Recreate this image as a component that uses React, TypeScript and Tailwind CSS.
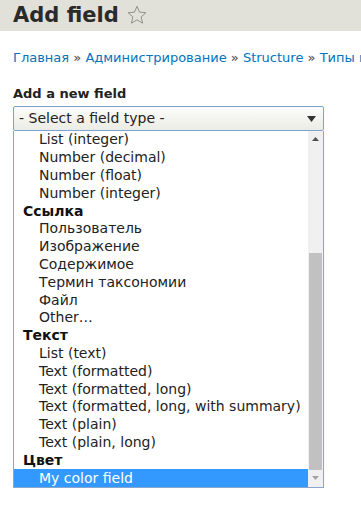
import React from "react";

const items: { label: string; group?: boolean; selected?: boolean }[] = [
  { label: "List (integer)" },
  { label: "Number (decimal)" },
  { label: "Number (float)" },
  { label: "Number (integer)" },
  { label: "Ссылка", group: true },
  { label: "Пользователь" },
  { label: "Изображение" },
  { label: "Содержимое" },
  { label: "Термин таксономии" },
  { label: "Файл" },
  { label: "Other…" },
  { label: "Текст", group: true },
  { label: "List (text)" },
  { label: "Text (formatted)" },
  { label: "Text (formatted, long)" },
  { label: "Text (formatted, long, with summary)" },
  { label: "Text (plain)" },
  { label: "Text (plain, long)" },
  { label: "Цвет", group: true },
  { label: "My color field", selected: true },
];

const font = { fontFamily: '"DejaVu Sans", Verdana, sans-serif' };

export default function App() {
  return (
    <div className="w-[361px] h-[518px] bg-white overflow-hidden" style={font}>
      {/* page title band */}
      <div className="h-[31px] bg-[#e1e0d9] pl-[13px] flex items-center gap-[7px]">
        <h1 className="text-[21px] leading-none font-bold text-[#2a2a2a]">Add field</h1>
        <svg width="22" height="22" viewBox="0 0 24 24" className="mt-[-2px]">
          <path
            d="M12 2.5l2.8 6.4 6.9.6-5.2 4.6 1.6 6.8L12 17.3l-6.1 3.6 1.6-6.8-5.2-4.6 6.9-.6z"
            fill="none"
            stroke="#8a8a86"
            strokeWidth="1"
            strokeLinejoin="round"
          />
        </svg>
      </div>

      {/* breadcrumb */}
      <div className="mt-[19px] pl-[13px] w-[361px] overflow-hidden whitespace-nowrap text-[13px] leading-[16px] text-[#0074bd]">
        Главная <span className="text-[#444]">»</span> Администрирование <span className="text-[#444]">»</span> Structure{" "}
        <span className="text-[#444]">»</span> Типы м
      </div>

      <div className="mt-[20px] pl-[13px]">
        <div className="text-[13px] leading-[16px] font-bold text-[#222]">Add a new field</div>

        {/* select */}
        <div className="mt-[4px] w-[311px] h-[25px] border border-[#7fa3d0] rounded-[2px] bg-gradient-to-b from-[#fcfcfa] to-[#ecece6] flex items-center justify-between pl-[5px] pr-[7px]">
          <span className="text-[14px] text-[#222]">- Select a field type -</span>
          <svg width="9" height="6" viewBox="0 0 9 6">
            <path d="M0 0h9L4.5 6z" fill="#333" />
          </svg>
        </div>

        {/* open listbox */}
        <div className="w-[311px] border-x border-b border-[#8aa6cc] flex bg-white">
          <div className="flex-1 flex flex-col">
            {items.map((it) => (
              <div
                key={it.label}
                className={
                  "h-[17.8px] flex items-center text-[14px] whitespace-nowrap " +
                  (it.group
                    ? "pl-[9px] font-bold text-[#111]"
                    : it.selected
                    ? "pl-[25px] bg-[#3399ff] text-white"
                    : "pl-[25px] text-[#222]")
                }
              >
                {it.label}
              </div>
            ))}
          </div>

          {/* scrollbar */}
          <div className="w-[15px] bg-[#f0f0f0] flex flex-col">
            <div className="h-[15px] flex items-center justify-center">
              <svg width="7" height="4" viewBox="0 0 7 4">
                <path d="M0 4h7L3.5 0z" fill="#505050" />
              </svg>
            </div>
            <div className="h-[107px]" />
            <div className="flex-1 mx-[1px] bg-[#c1c1c1]" />
            <div className="h-[17px] flex items-center justify-center">
              <svg width="7" height="4" viewBox="0 0 7 4">
                <path d="M0 0h7L3.5 4z" fill="#a3a3a3" />
              </svg>
            </div>
          </div>
        </div>
      </div>
    </div>
  );
}
